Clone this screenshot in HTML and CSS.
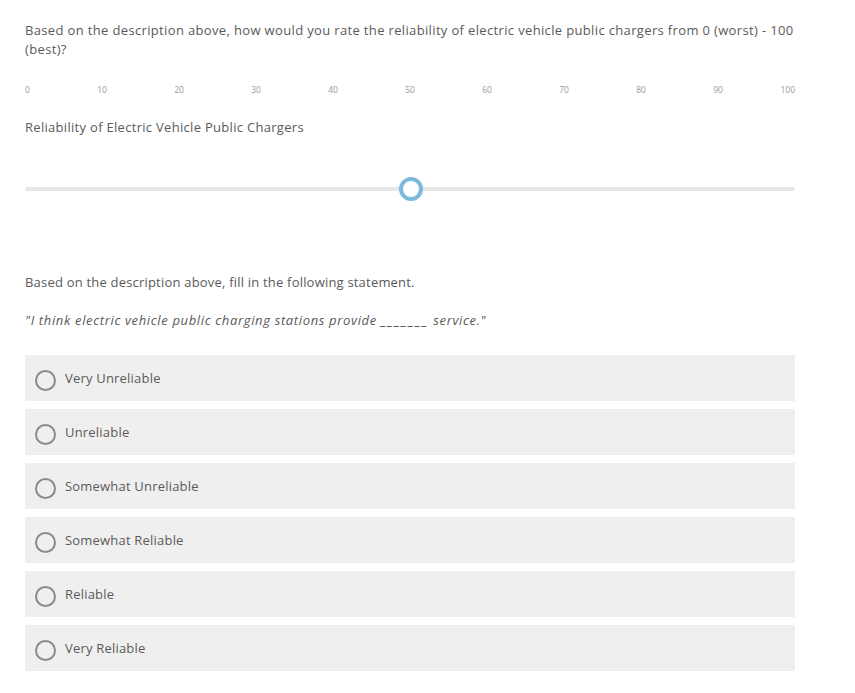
FILE: index.html
```html
<!DOCTYPE html>
<html lang="en">
<head>
<meta charset="utf-8">
<title>Survey</title>
<link rel="stylesheet" href="styles.css">
</head>
<body>
<main class="survey">
  <section class="question q-slider">
    <p class="q-text">Based on the description above, how would you rate the reliability of electric vehicle public chargers from 0 (worst) - 100 (best)?</p>
    <div class="scale">
      <span>0</span><span>10</span><span>20</span><span>30</span><span>40</span><span>50</span><span>60</span><span>70</span><span>80</span><span>90</span><span>100</span>
    </div>
    <div class="statement">Reliability of Electric Vehicle Public Chargers</div>
    <div class="slider">
      <div class="track"></div>
      <div class="thumb" style="left: 50%"></div>
    </div>
  </section>

  <section class="question q-choice">
    <p class="q-text">Based on the description above, fill in the following statement.</p>
    <p class="quote">"I think electric vehicle public charging stations provide <span class="blank">_______</span> service."</p>
    <ul class="choices">
      <li class="choice"><span class="radio"></span><span class="label">Very Unreliable</span></li>
      <li class="choice"><span class="radio"></span><span class="label">Unreliable</span></li>
      <li class="choice"><span class="radio"></span><span class="label">Somewhat Unreliable</span></li>
      <li class="choice"><span class="radio"></span><span class="label">Somewhat Reliable</span></li>
      <li class="choice"><span class="radio"></span><span class="label">Reliable</span></li>
      <li class="choice"><span class="radio"></span><span class="label">Very Reliable</span></li>
    </ul>
  </section>
</main>
</body>
</html>
```
FILE: styles.css
```css
* { box-sizing: border-box; }
html, body { margin: 0; padding: 0; background: #fff; }
body {
  font-family: "Open Sans", "Liberation Sans", sans-serif;
  color: #5a5a5a;
  font-size: 13px;
  letter-spacing: 0.2px;
}
.survey {
  width: 770px;
  margin-left: 25px;
  padding-top: 21px;
}
.q-text {
  margin: 0;
  line-height: 19px;
}
.q-slider .q-text { letter-spacing: 0.35px; }
.scale {
  display: flex;
  justify-content: space-between;
  margin-top: 25px;
  font-size: 8.5px;
  letter-spacing: 0;
  color: #999;
  height: 12px;
  line-height: 12px;
}
.scale span { width: 0; display: flex; justify-content: center; }
.scale span:first-child { justify-content: flex-start; }
.scale span:last-child { justify-content: flex-end; }
.statement {
  margin-top: 22px;
  line-height: 18px;
  letter-spacing: 0.3px;
}
.slider {
  position: relative;
  margin-top: 51px;
  height: 4px;
}
.track {
  height: 4px;
  background: #e7e7e7;
  border-radius: 2px;
}
.thumb {
  position: absolute;
  top: 50%;
  width: 24px;
  height: 24px;
  margin-left: -11px;
  margin-top: -12px;
  border: 4px solid #7db9dd;
  border-radius: 50%;
  background: #fff;
}
.q-choice { margin-top: 82px; }
.quote {
  margin: 19px 0 0;
  font-style: italic;
  line-height: 18px;
  letter-spacing: 0.65px;
}
.blank { letter-spacing: 1.8px; }
.choices {
  list-style: none;
  margin: 26px 0 0;
  padding: 0;
  display: flex;
  flex-direction: column;
  gap: 8px;
}
.choice {
  height: 46px;
  background: #efefef;
  display: flex;
  align-items: center;
  padding-left: 10px;
}
.radio {
  width: 21px;
  height: 21px;
  border: 2px solid #8a8a8a;
  border-radius: 50%;
  margin-top: 4px;
  flex: none;
}
.label {
  margin-left: 9px;
}
```
